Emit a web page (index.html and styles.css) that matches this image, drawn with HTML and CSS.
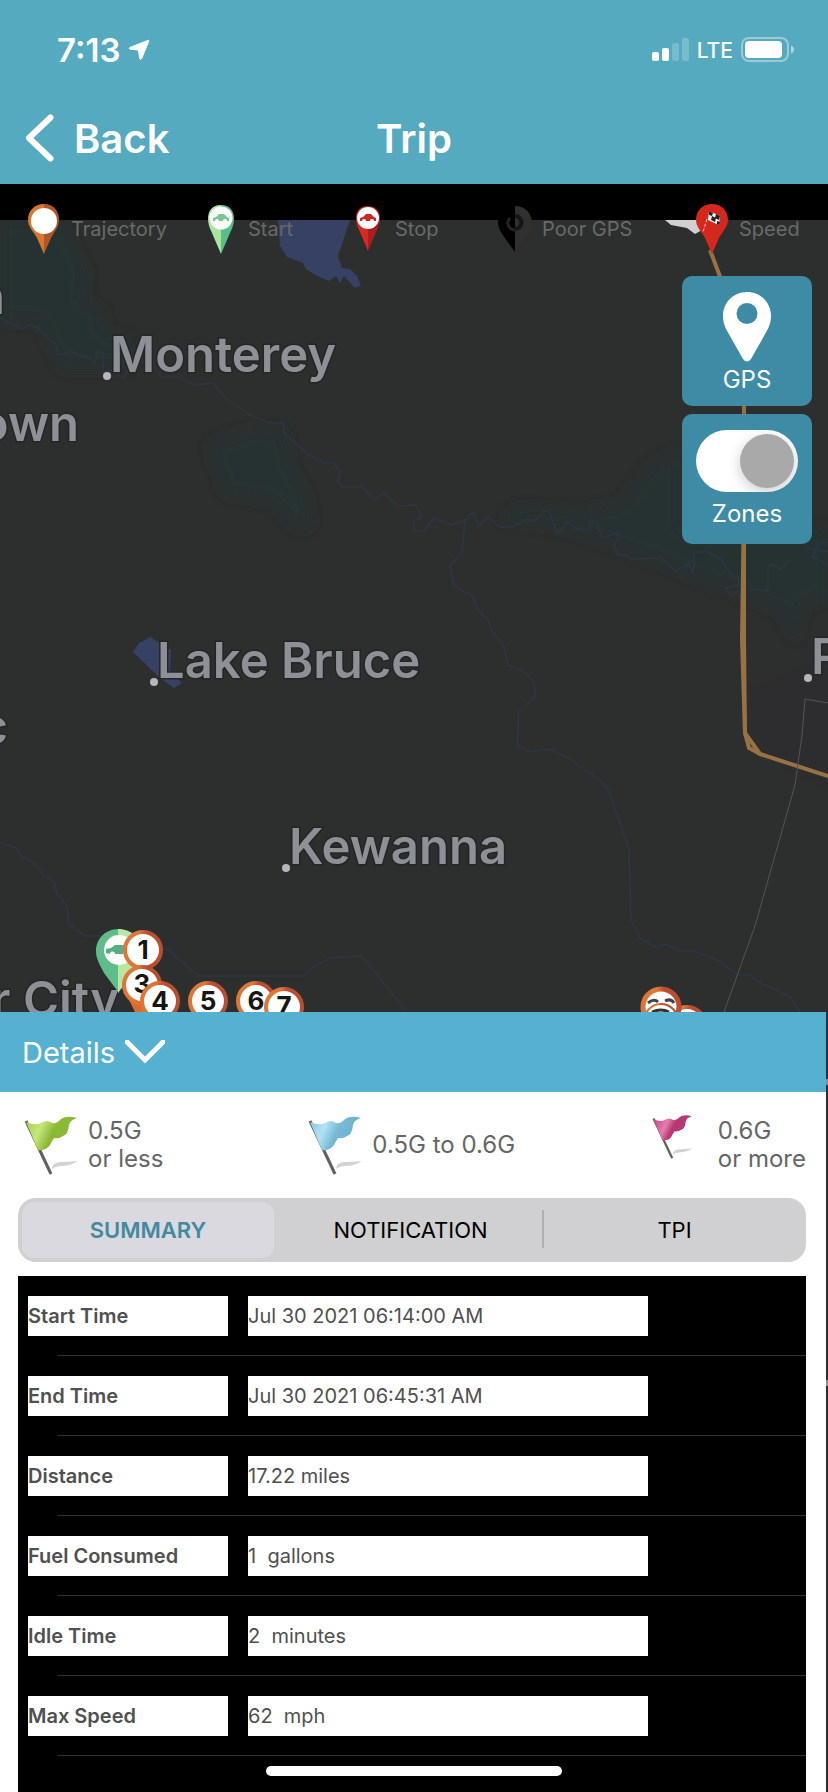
FILE: index.html
```html
<!DOCTYPE html>
<html lang="en">
<head>
<meta charset="utf-8">
<meta name="viewport" content="width=device-width, initial-scale=1">
<title>Trip</title>
<link rel="stylesheet" href="styles.css">
</head>
<body>
<header class="header">
  <div class="status">
    <span class="time">7:13</span>
    <svg class="arrow" viewBox="0 0 22 22" width="22" height="22" aria-hidden="true"><path d="M20.500 1.200 1.800 8.500Q.6 9.500 2 10.200L10.500 11 11.600 19.500Q12.500 21 13.700 19.500L20.900 1.900Q21 1 20.500 1.200Z" fill="#fff" stroke="#fff"/></svg>
    <span class="spacer"></span>
    <svg viewBox="0 0 38 24" width="38" height="24" aria-hidden="true"><g fill="#fff"><rect y="14" width="7" height="9" rx="2"/><rect x="10" y="10" width="7" height="13" rx="2"/><g opacity=".2"><rect x="20" y="5" width="7" height="18" rx="2"/><rect x="30" width="7" height="23" rx="2"/></g></g></svg>
    <span class="network">LTE</span>
    <svg viewBox="0 0 54 26" width="54" height="26" aria-hidden="true"><rect x="1" y="1" width="46" height="23" rx="7" fill="none" stroke="#fff" stroke-width="2" opacity=".4"/><rect x="4" y="4" width="37" height="17" rx="4" fill="#fff"/><path d="M50 8.500q3 1 3 4t-3 4z" fill="#fff" opacity=".5"/></svg>
  </div>
  <nav class="navbar">
    <button class="back" type="button">
      <svg viewBox="0 0 28 48" width="28" height="48" aria-hidden="true"><path d="M24.500 3.500 3 24l21.500 20.500" fill="none" stroke="#fff" stroke-width="6" stroke-linecap="round" stroke-linejoin="round"/></svg>
      <span>Back</span>
    </button>
    <h1 class="title">Trip</h1>
  </nav>
</header>

<main class="stage">
  <svg class="map" viewBox="0 220 828 1572" preserveAspectRatio="xMidYMin slice" role="img" aria-label="Trip map">
    <defs>
      <linearGradient id="orange"><stop offset=".4" stop-color="#e07538"/><stop offset=".6" stop-color="#bb4d30"/></linearGradient>
      <filter id="soft"><feGaussianBlur stdDeviation="7"/></filter>
    </defs>
    <rect y="220" width="828" height="1572" fill="#2c2f2e"/>
    <g fill="#283132" filter="url(#soft)">
      <path d="M0 220H60L86 270 82 300 102 310 104 332 130 340V368H60L40 320H0Z"/>
      <path d="M208 444 252 430 284 432 290 466 304 490 312 526 296 528 270 500 226 494Z"/>
      <path d="M650 466 680 450V530L828 530V600L804 602 796 642 782 612 748 596 700 580 660 562 600 540 560 526 500 520 520 508 580 512 620 505Z"/>
    </g>
    <path d="M750 690 828 655V790L780 765 750 735Z" fill="#2d2d30"/>
    <g fill="none" stroke="#2c3645" stroke-width="1.500">
      <path d="M0 318 22 329 30 325 38 328 56 345 58 354H68L70 351 94 361 98 358 96 352H103V371L112 370 124 378 128 370 118 362 150 362 162 377H178L195 385 213 383 226 399 250 415 270 423H283L285 435 298 445 307 454 324 463H334L340 471 338 480 342 487H362L374 500 383 493 398 506 416 505 422 518 414 520V531H424L434 518 450 525 466 520 473 512 479 526 488 517 500 527H512L525 520H536L543 511H549L557 533 568 522 576 529 589 530 590 522 597 522 602 538 612 534H620L614 546 618 555 626 555 632 559 661 558 676 571 688 564 694 574V552H708L722 560 732 576 738 577 739 585 726 588 730 595 739 591"/>
      <path d="M465 519 462 553 450 565 454 586 472 596 477 608 488 620 492 631 504 646 508 665 528 674 535 686V696L519 712 517 745 530 752 549 749 568 758 600 780 609 791 629 849 631 920 640 938 655 947 667 944 679 951H695L719 961 738 975H750L762 984 790 996 800 1012"/>
      <path d="M828 565 812 556 820 544 828 542M828 552 806 548M750 589 768 591V567L772 564 780 569 790 560"/>
      <path d="M0 843 16 848 22 857 32 861 44 875 54 882 57 894 67 906 69 924 85 936H110L168 950 199 976H303L313 967 330 958 362 956 405 1010"/>
    </g>
    <path d="M278 220H350L338 256 342 268 350 269 357 276 361 286 355 288 344 276 340 283 336 276 329 281 317 276 306 269 303 263 287 257 280 246Z" fill="#364163"/>
    <path d="M133 652 139 643 150 637 158 642 171 650 170 670 182 683 174 688 160 678Z" fill="#364163"/>
    <path d="M665 220H702V230L695 234 687 228 671 225Z" fill="#d0d0d2"/>
    <g fill="none" stroke="#987242" stroke-width="4">
      <path d="M710 250 744 340V500L742 640 745 733 760 754 828 776"/>
      <path d="M744 500V640L745 733 749 748 760 754"/>
    </g>
    <path d="M828 703 805 699 802 735 795 785 755 926 724 1012" fill="none" stroke="#535556"/>
    <path d="M826 1082h2M826 1383h2" stroke="#888b90" stroke-width="6"/>
    <g class="places">
      <text x="5" y="314" text-anchor="end">n</text>
      <text x="110" y="372">Monterey</text>
      <text x="79" y="441" text-anchor="end">own</text>
      <text x="157" y="678">Lake Bruce</text>
      <text x="8" y="744" text-anchor="end">c</text>
      <text x="811" y="674">R</text>
      <text x="289" y="864">Kewanna</text>
      <text x="119" y="1017" text-anchor="end">r City</text>
    </g>
    <g fill="#b5b7bc"><circle cx="107" cy="376" r="4"/><circle cx="154" cy="682" r="4"/><circle cx="286" cy="868" r="4"/><circle cx="808" cy="678" r="4"/></g>
    <path d="M119 929C104 929 96 940 96 951c0 8 4 14 8 22l15 20Z" fill="#5fbd8a"/>
    <path d="M118 929c14 0 24 10 24 22 0 8-5 14-9 22l-15 20Z" fill="#b9e6a3"/>
    <circle cx="119" cy="950" r="15" fill="#fff"/>
    <path d="M106 953v-4l5-1 4-3h9l4 4 4 1v4h-4a2.500 2.500 0 0 0-5 0h-8a2.500 2.500 0 0 0-5 0Z" fill="#58ae80"/>
    <path d="M128 998h26l-8 16h-10Z" fill="#dc6a2d"/>
    <circle cx="143" cy="950" r="18" fill="#fff" stroke="url(#orange)" stroke-width="4"/>
    <text class="stop" x="143" y="959">1</text>
    <circle cx="142" cy="985" r="18" fill="#fff" stroke="url(#orange)" stroke-width="4"/>
    <text class="stop" x="142" y="993">3</text>
    <g fill="#fff" stroke="url(#orange)" stroke-width="4">
      <circle cx="160" cy="1001" r="18"/><circle cx="208" cy="1001" r="18"/><circle cx="256" cy="1001" r="18"/>
    </g>
    <text class="stop" x="160" y="1010">4</text>
    <text class="stop" x="208" y="1010">5</text>
    <text class="stop" x="256" y="1010">6</text>
    <circle cx="284" cy="1007" r="18" fill="#fff" stroke="url(#orange)" stroke-width="4"/>
    <text class="stop" x="284" y="1015">7</text>
    <circle cx="687" cy="1025" r="18" fill="#fff" stroke="url(#orange)" stroke-width="4"/>
    <circle cx="661" cy="1007" r="18" fill="#fff" stroke="url(#orange)" stroke-width="5"/>
    <path d="M648 1003q6-5 10-1M665 1001q6-3 9 2" fill="none" stroke="#444" stroke-width="3"/>
    <circle cx="661" cy="1021" r="17" fill="#fff" stroke="url(#orange)" stroke-width="2"/>
    <path d="M652 1012q9-4 17 0" fill="none" stroke="#333" stroke-width="3"/>
  </svg>

  <div class="overlay">
    <ul class="legend">
      <li><svg viewBox="0 0 34 50" width="34" height="50" aria-hidden="true"><path d="M17 0C7 0 1 7 1 16c0 7 6 12 9 18l7 16Z" fill="#d9762f"/><path d="M17 0c10 0 15 7 15 16 0 7-5 12-8 18l-7 16Z" fill="#ae5827"/><circle cx="17" cy="17" r="13" fill="#fff"/></svg>Trajectory</li>
      <li><svg viewBox="0 0 34 50" width="34" height="50" aria-hidden="true"><path d="M17 1C8 1 4 7 4 15c0 5 2 10 4 14l9 21Z" fill="#a8e5a0"/><path d="M17 1c9 0 13 6 13 14 0 5-2 10-4 14l-9 21Z" fill="#59bd87"/><circle cx="17" cy="14" r="11.500" fill="#fff"/><path d="M9 17v-3l3-1 3-3h5l3 3 2 1v3h-2a2 2 0 0 0-4 0h-4a2 2 0 0 0-4 0Z" fill="#78c894"/></svg>Start</li>
      <li><svg viewBox="0 0 34 50" width="34" height="50" aria-hidden="true"><path d="M17 2C9 2 5 7 5 14c0 5 2 10 4 14l8 19Z" fill="#d8291f"/><path d="M17 2c8 0 12 5 12 12 0 5-2 10-4 14l-8 19Z" fill="#a91f1d"/><circle cx="17" cy="14" r="11" fill="#fff"/><path d="M9 17v-3l3-1 3-3h5l3 3 2 1v3h-2a2 2 0 0 0-4 0h-4a2 2 0 0 0-4 0Z" fill="#cf2722"/></svg>Stop</li>
      <li><svg viewBox="0 0 34 50" width="34" height="50" aria-hidden="true"><path d="M17 2C6 2 0 10 0 19c0 6 5 12 9 18l8 11Z" fill="#000"/><path d="M17 2c11 0 17 8 17 17 0 6-5 12-9 18l-8 11Z" fill="#303030"/><path d="M17 12a6 6 0 1 1 0 13" fill="none" stroke="#161616" stroke-width="4"/><path d="M12 14a7 7 0 0 0 5 12" fill="none" stroke="#242424" stroke-width="3"/></svg>Poor GPS</li>
      <li><svg viewBox="0 0 34 50" width="34" height="50" aria-hidden="true"><path d="M17 0C7 0 1 7 1 16c0 7 6 12 9 18l7 16 7-16c3-6 9-11 9-18C33 7 27 0 17 0Z" fill="#d5281d"/><path d="M12 15 8 28" stroke="#f5d2cf" stroke-dasharray="3 2"/><path d="m14 7 11 5-1 9-11-5Z" fill="#f4f4f4"/><path d="m14 7 4 2-1 3-3-1ZM21 10l4 2-1 4-4-2ZM17 12l4 2-1 4-4-2ZM22 17l3 1-1 3-2-1Z" fill="#222"/></svg>Speed</li>
    </ul>

    <div class="tools">
      <button class="tool" type="button">
        <svg viewBox="0 0 50 70" width="50" height="70" aria-hidden="true"><path fill-rule="evenodd" d="M25 0C11 0 1 11 1 24c0 8 3 13 7 20l13 23q4 5 8 0l13-23c4-7 7-12 7-20C49 11 39 0 25 0Zm0 11a10.500 10.500 0 1 1 0 21 10.500 10.500 0 0 1 0-21Z" fill="#fff"/></svg>
        <span>GPS</span>
      </button>
      <label class="tool">
        <input class="switch" type="checkbox" role="switch" checked>
        <span>Zones</span>
      </label>
    </div>

    <section class="panel">
      <button class="details" type="button">
        <span>Details</span>
        <svg viewBox="0 0 40 24" width="40" height="24" aria-hidden="true"><path d="m2 2 18 18L38 2" fill="none" stroke="#fff" stroke-width="5" stroke-linecap="round"/></svg>
      </button>

      <svg class="defs" width="0" height="0" aria-hidden="true">
        <defs>
          <linearGradient id="green" x2="1" y2=".3"><stop stop-color="#a5cf45"/><stop offset=".35" stop-color="#c6e67c"/><stop offset=".6" stop-color="#8cba35"/><stop offset="1" stop-color="#8ab738"/></linearGradient>
          <linearGradient id="blue" x2="1" y2=".3"><stop stop-color="#83c8e2"/><stop offset=".35" stop-color="#b0e2f3"/><stop offset=".6" stop-color="#77b9d6"/><stop offset="1" stop-color="#6eafcd"/></linearGradient>
          <linearGradient id="pink" x2="1" y2=".3"><stop stop-color="#c63e80"/><stop offset=".4" stop-color="#e27eae"/><stop offset=".6" stop-color="#b93672"/><stop offset="1" stop-color="#b33c72"/></linearGradient>
          <symbol id="flag" viewBox="0 0 56 60">
            <path d="M28 54q0-6 8-7 8 0 18-1-8 5-16 5-6 0-10 3Z" fill="#d3d3d3"/>
            <path d="M2 6 27 59" stroke="#606060" stroke-width="3"/>
            <path d="M2 7q9 4 15 1 6-4 11 0 5 1 9-4 6-4 16-1-7 2-8 7-1 10-6 11-4 3-9 2-2 3-4 7-4 6-12 5Z"/>
          </symbol>
        </defs>
      </svg>
      <ul class="flags">
        <li><svg width="56" height="60" fill="url(#green)" aria-hidden="true"><use href="#flag"/></svg><span>0.5G<br>or less</span></li>
        <li><svg width="56" height="60" fill="url(#blue)" aria-hidden="true"><use href="#flag"/></svg><span>0.5G to 0.6G</span></li>
        <li class="small"><svg width="42" height="45" fill="url(#pink)" aria-hidden="true"><use href="#flag"/></svg><span>0.6G<br>or more</span></li>
      </ul>

      <div class="segments" role="tablist">
        <button class="segment selected" type="button" role="tab" aria-selected="true">SUMMARY</button>
        <button class="segment" type="button" role="tab" aria-selected="false">NOTIFICATION</button>
        <button class="segment divided" type="button" role="tab" aria-selected="false">TPI</button>
      </div>

      <div class="summary">
        <table class="facts">
          <tr><th scope="row"><span>Start Time</span></th><td><span>Jul 30 2021 06:14:00 AM</span></td></tr>
          <tr><th scope="row"><span>End Time</span></th><td><span>Jul 30 2021 06:45:31 AM</span></td></tr>
          <tr><th scope="row"><span>Distance</span></th><td><span>17.22 miles</span></td></tr>
          <tr><th scope="row"><span>Fuel Consumed</span></th><td><span>1&nbsp; gallons</span></td></tr>
          <tr><th scope="row"><span>Idle Time</span></th><td><span>2&nbsp; minutes</span></td></tr>
          <tr><th scope="row"><span>Max Speed</span></th><td><span>62&nbsp; mph</span></td></tr>
        </table>
      </div>
    </section>
  </div>
  <div class="home-bar"></div>
</main>
</body>
</html>
```
FILE: styles.css
```css
* { box-sizing: border-box; }

body {
  margin: 0;
  min-height: 100vh;
  display: flex;
  flex-direction: column;
  background: #000;
  font-family: Inter, "Liberation Sans", sans-serif;
}

button {
  border: 0;
  padding: 0;
  background: none;
  color: inherit;
  font: inherit;
}

ul { margin: 0; padding: 0; list-style: none; }
svg { flex: none; }

.header { background: #56aabf; color: #fff; }

.status {
  display: flex;
  align-items: center;
  height: 100px;
  padding: 0 33px 0 57px;
}
.time { font-size: 33px; font-weight: 600; }
.arrow { margin-left: 8px; }
.spacer { flex: 1; }
.network { margin: 0 8px 0 7px; font-size: 21px; font-weight: 500; }

.navbar {
  display: grid;
  grid-template-columns: 1fr auto 1fr;
  align-items: center;
  height: 84px;
  padding: 0 26px 8px;
}
.back {
  display: flex;
  align-items: center;
  gap: 20px;
  font-size: 40px;
  font-weight: 600;
}
.title { margin: 0; font-size: 40px; font-weight: 600; }

.stage { position: relative; flex: 1; display: flex; }

.map {
  position: absolute;
  top: 36px;
  left: 0;
  width: 100%;
  height: calc(100% - 36px);
}
.places {
  fill: #8d9096;
  stroke: #242626;
  stroke-width: 3px;
  paint-order: stroke;
  font-size: 49px;
  font-weight: 600;
}
.stop { font-size: 26px; font-weight: 700; text-anchor: middle; fill: #151515; }

.overlay {
  position: relative;
  flex: 1;
  min-width: 0;
  display: flex;
  flex-direction: column;
}

.legend {
  display: grid;
  grid-template-columns: 177fr 147fr 147fr 197fr 133fr;
  padding: 20px 0 0 27px;
  color: #686a6a;
  font-size: 20px;
}
.legend li { display: flex; align-items: center; gap: 10px; white-space: nowrap; }

.tools {
  flex: 1;
  display: flex;
  flex-direction: column;
  align-items: flex-end;
  gap: 8px;
  padding: 22px 16px 0;
}
.tool {
  display: flex;
  flex-direction: column;
  align-items: center;
  justify-content: space-between;
  width: 130px;
  height: 130px;
  padding: 16px 0 12px;
  border-radius: 10px;
  background: #3e8ba6;
  color: #fff;
  font-size: 24px;
  line-height: 28px;
}
.switch {
  appearance: none;
  display: flex;
  justify-content: flex-end;
  width: 102px;
  height: 62px;
  margin: 0;
  padding: 4px;
  border-radius: 31px;
  background: #fff;
  overflow: hidden;
}
.tool .switch + span { margin-bottom: 4px; }
.switch::before {
  content: "";
  width: 54px;
  height: 54px;
  border-radius: 50%;
  background: #a9a9a9;
  box-shadow: 0 4px 14px rgba(0, 0, 0, 0.2);
}

.panel { margin-right: 2px; background: #fff; }

.details {
  display: flex;
  align-items: center;
  gap: 10px;
  width: 100%;
  height: 80px;
  padding: 0 22px;
  background: #55b1cf;
  color: #fff;
  font-size: 29px;
}
.defs { position: absolute; }

.flags {
  display: grid;
  grid-template-columns: 284fr 343fr 174fr;
  height: 106px;
  padding: 22px 0 0 24px;
  color: #666;
  font-size: 24px;
  line-height: 28px;
}
.flags li { display: flex; align-items: center; gap: 8px; height: 62px; white-space: nowrap; }
.flags .small { gap: 24px; }
.flags .small svg { align-self: flex-start; }

.segments {
  display: grid;
  grid-template-columns: 252fr 261fr 255fr;
  gap: 6px;
  height: 64px;
  margin: 0 20px 14px 18px;
  padding: 4px;
  border-radius: 18px;
  background: #d0d0d2;
  color: #000;
  font-size: 22px;
}
.segment { position: relative; border-radius: 12px; }
.segment.selected { background: #d9d9df; color: #4389a0; font-weight: 600; }
.segment.divided::before {
  content: "";
  position: absolute;
  top: 8px;
  bottom: 10px;
  left: -5px;
  width: 2px;
  background: #b0b0b3;
}

.summary { margin: 0 20px 0 18px; padding-bottom: 36px; background: #000; }
.facts {
  width: 100%;
  border-collapse: collapse;
  color: #505050;
  font-size: 20px;
  line-height: 40px;
}
.facts tr { background: linear-gradient(#333, #333) 40px 79px / 100% 1px no-repeat; }
.facts th,
.facts td { padding: 20px 10px; text-align: left; }
.facts th { width: 220px; font-weight: 600; }
.facts span { display: block; background: #fff; white-space: nowrap; }
.facts td span { max-width: 400px; }

.home-bar {
  position: absolute;
  bottom: 16px;
  left: 50%;
  width: 296px;
  height: 10px;
  margin-left: -148px;
  border-radius: 5px;
  background: #fff;
}
```
